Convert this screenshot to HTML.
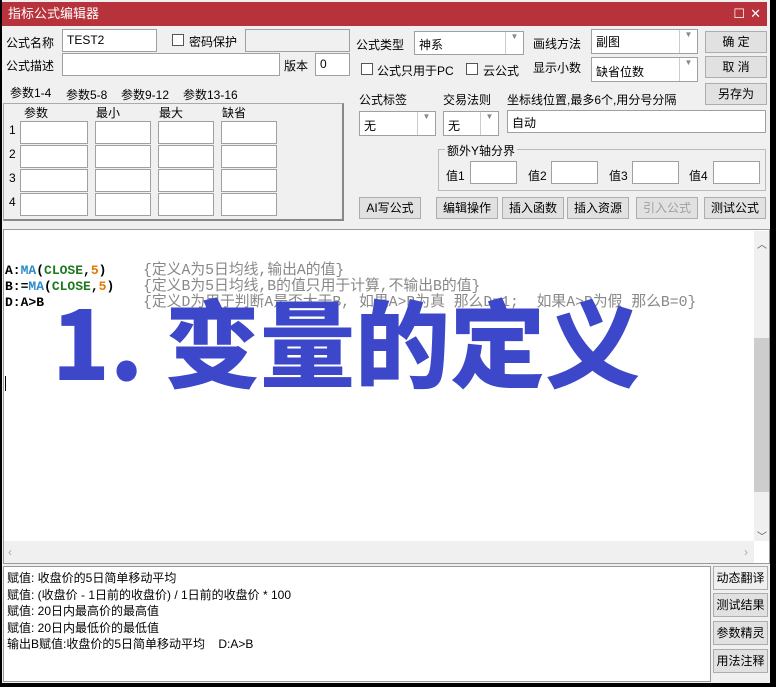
<!DOCTYPE html>
<html><head><meta charset="utf-8"><style>
*{box-sizing:border-box;margin:0;padding:0}
body{width:776px;height:687px;background:#000;position:relative;overflow:hidden;font-family:"Liberation Sans","Noto Sans CJK SC",sans-serif;font-size:12px;color:#000}
.a{position:absolute}
.win{left:2px;top:0;width:768px;height:683px;background:#f0f0f0}
.title{left:2px;top:2px;width:765px;height:24px;background:#b7323a;color:#fff;font-size:13px;line-height:24px;padding-left:6px}
.in{position:absolute;background:#fff;border:1px solid #a0a0a0}
.btn{position:absolute;background:#e1e1e1;border:1px solid #adadad;text-align:center;font-size:12px}
.lb{position:absolute;font-size:12px;white-space:nowrap}
.cb{position:absolute;width:12px;height:12px;border:1px solid #555;background:#fff}
.dd{position:absolute;right:0;top:0;bottom:0;width:18px;border-left:1px solid #ccc;color:#888;font-size:8px;text-align:center}
.code{font-family:"Liberation Mono","DejaVu Sans Mono","Noto Sans CJK SC",monospace;font-size:13px;font-weight:bold;white-space:pre;position:absolute;left:5px}
.cm{position:absolute;left:143px;color:#888;font-family:"Liberation Mono","Noto Sans CJK SC",monospace;font-size:14.8px;white-space:pre;line-height:16px}
</style></head><body>
<div class="a win"></div>
<div class="a title">指标公式编辑器<span style="position:absolute;right:22px;top:0">☐</span><span style="position:absolute;right:6px;top:0">✕</span></div>

<div class="lb" style="left:6px;top:34px">公式名称</div>
<div class="in" style="left:62px;top:29px;width:95px;height:23px;padding:3px 4px">TEST2</div>
<div class="cb" style="left:172px;top:34px"></div><div class="lb" style="left:189px;top:33px">密码保护</div>
<div class="in" style="left:245px;top:29px;width:105px;height:23px;background:#f0f0f0"></div>
<div class="lb" style="left:6px;top:57px">公式描述</div>
<div class="in" style="left:62px;top:53px;width:218px;height:23px"></div>
<div class="lb" style="left:284px;top:57px">版本</div>
<div class="in" style="left:315px;top:53px;width:35px;height:23px;padding:3px 4px">0</div>

<div class="lb" style="left:10px;top:84px">参数1-4</div>
<div class="lb" style="left:66px;top:86px">参数5-8</div>
<div class="lb" style="left:121px;top:86px">参数9-12</div>
<div class="lb" style="left:183px;top:86px">参数13-16</div>
<div class="a" style="left:3px;top:103px;width:341px;height:118px;border:1px solid #aaa;border-bottom:2px solid #888;border-right:2px solid #888"></div>
<div class="lb" style="left:24px;top:104px">参数</div><div class="lb" style="left:96px;top:104px">最小</div><div class="lb" style="left:159px;top:104px">最大</div><div class="lb" style="left:222px;top:104px">缺省</div>
<div class="lb" style="left:9px;top:123px">1</div><div class="lb" style="left:9px;top:147px">2</div><div class="lb" style="left:9px;top:171px">3</div><div class="lb" style="left:9px;top:195px">4</div>
<div class="in" style="left:20px;top:121px;width:68px;height:23px"></div><div class="in" style="left:95px;top:121px;width:56px;height:23px"></div><div class="in" style="left:158px;top:121px;width:56px;height:23px"></div><div class="in" style="left:221px;top:121px;width:56px;height:23px"></div>
<div class="in" style="left:20px;top:145px;width:68px;height:23px"></div><div class="in" style="left:95px;top:145px;width:56px;height:23px"></div><div class="in" style="left:158px;top:145px;width:56px;height:23px"></div><div class="in" style="left:221px;top:145px;width:56px;height:23px"></div>
<div class="in" style="left:20px;top:169px;width:68px;height:23px"></div><div class="in" style="left:95px;top:169px;width:56px;height:23px"></div><div class="in" style="left:158px;top:169px;width:56px;height:23px"></div><div class="in" style="left:221px;top:169px;width:56px;height:23px"></div>
<div class="in" style="left:20px;top:193px;width:68px;height:23px"></div><div class="in" style="left:95px;top:193px;width:56px;height:23px"></div><div class="in" style="left:158px;top:193px;width:56px;height:23px"></div><div class="in" style="left:221px;top:193px;width:56px;height:23px"></div>

<div class="lb" style="left:356px;top:36px">公式类型</div>
<div class="in" style="left:414px;top:31px;width:110px;height:24px;padding:4px 4px">神系<div class="dd">▼</div></div>
<div class="lb" style="left:533px;top:35px">画线方法</div>
<div class="in" style="left:591px;top:29px;width:107px;height:25px;padding:3px 4px">副图<div class="dd">▼</div></div>
<div class="btn" style="left:705px;top:31px;width:62px;height:22px;line-height:20px">确 定</div>
<div class="cb" style="left:361px;top:63px"></div><div class="lb" style="left:377px;top:62px">公式只用于PC</div>
<div class="cb" style="left:466px;top:63px"></div><div class="lb" style="left:483px;top:62px">云公式</div>
<div class="lb" style="left:533px;top:59px">显示小数</div>
<div class="in" style="left:591px;top:57px;width:107px;height:25px;padding:5px 4px">缺省位数<div class="dd">▼</div></div>
<div class="btn" style="left:705px;top:56px;width:62px;height:22px;line-height:20px">取 消</div>
<div class="btn" style="left:705px;top:83px;width:62px;height:22px;line-height:20px">另存为</div>
<div class="lb" style="left:359px;top:91px">公式标签</div>
<div class="lb" style="left:443px;top:91px">交易法则</div>
<div class="lb" style="left:507px;top:91px">坐标线位置,最多6个,用分号分隔</div>
<div class="in" style="left:359px;top:111px;width:77px;height:25px;padding:5px 4px">无<div class="dd">▼</div></div>
<div class="in" style="left:443px;top:111px;width:56px;height:25px;padding:5px 4px">无<div class="dd">▼</div></div>
<div class="in" style="left:507px;top:110px;width:259px;height:23px;padding:3px 4px">自动</div>
<div class="a" style="left:438px;top:149px;width:328px;height:42px;border:1px solid #bbb"></div>
<div class="lb" style="left:445px;top:142px;background:#f0f0f0;padding:0 2px">额外Y轴分界</div>
<div class="lb" style="left:446px;top:167px">值1</div><div class="in" style="left:470px;top:161px;width:47px;height:23px"></div>
<div class="lb" style="left:528px;top:167px">值2</div><div class="in" style="left:551px;top:161px;width:47px;height:23px"></div>
<div class="lb" style="left:609px;top:167px">值3</div><div class="in" style="left:632px;top:161px;width:47px;height:23px"></div>
<div class="lb" style="left:689px;top:167px">值4</div><div class="in" style="left:713px;top:161px;width:47px;height:23px"></div>
<div class="btn" style="left:359px;top:197px;width:62px;height:22px;line-height:20px">AI写公式</div>
<div class="btn" style="left:436px;top:197px;width:62px;height:22px;line-height:20px">编辑操作</div>
<div class="btn" style="left:502px;top:197px;width:62px;height:22px;line-height:20px">插入函数</div>
<div class="btn" style="left:567px;top:197px;width:62px;height:22px;line-height:20px">插入资源</div>
<div class="btn" style="left:636px;top:197px;width:62px;height:22px;line-height:20px;color:#a0a0a0">引入公式</div>
<div class="btn" style="left:704px;top:197px;width:62px;height:22px;line-height:20px">测试公式</div>

<div class="a" style="left:3px;top:229px;width:767px;height:335px;border:1px solid #999;background:#fff"></div>
<div class="a" style="left:754px;top:231px;width:15px;height:310px;background:#f0f0f0"></div>
<div class="a" style="left:754px;top:338px;width:15px;height:154px;background:#cdcdcd"></div>
<div class="lb" style="left:757px;top:236px;color:#555;font-size:10px">︿</div>
<div class="lb" style="left:757px;top:528px;color:#555;font-size:10px">﹀</div>
<div class="a" style="left:4px;top:541px;width:750px;height:22px;background:#f0f0f0"></div>
<div class="lb" style="left:8px;top:545px;color:#aaa">‹</div><div class="lb" style="left:744px;top:545px;color:#aaa">›</div>

<div class="code" style="top:263px">A:<span style="color:#2a8bc8">MA</span>(<span style="color:#1e7a1e">CLOSE</span>,<span style="color:#e07b00">5</span>)</div>
<div class="code" style="top:279px">B:=<span style="color:#2a8bc8">MA</span>(<span style="color:#1e7a1e">CLOSE</span>,<span style="color:#e07b00">5</span>)</div>
<div class="code" style="top:295px">D:A&gt;B</div>
<div class="cm" style="top:263px">{定义A为5日均线,输出A的值}</div>
<div class="cm" style="top:279px">{定义B为5日均线,B的值只用于计算,不输出B的值}</div>
<div class="cm" style="top:295px">{定义D为用于判断A是否大于B, 如果A>B为真 那么D=1;  如果A>B为假 那么B=0}</div>
<div class="a" style="left:5px;top:376px;width:1px;height:15px;background:#000"></div>
<div class="lb" style="left:52px;top:280px;font-family:'Noto Sans CJK SC',sans-serif;font-weight:900;font-size:95px;line-height:120px;color:#3d47c9;letter-spacing:0">1. 变量的定义</div>

<div class="a" style="left:3px;top:566px;width:708px;height:116px;background:#fff;border:1px solid #999"></div>
<div class="lb" style="left:7px;top:570px;line-height:16.5px">赋值: 收盘价的5日简单移动平均<br>赋值: (收盘价 - 1日前的收盘价) / 1日前的收盘价 * 100<br>赋值: 20日内最高价的最高值<br>赋值: 20日内最低价的最低值<br>输出B赋值:收盘价的5日简单移动平均&nbsp;&nbsp;&nbsp; D:A&gt;B</div>
<div class="btn" style="left:713px;top:566px;width:55px;height:24px;line-height:22px;background:#f0f0f0">动态翻译</div>
<div class="btn" style="left:713px;top:593px;width:55px;height:24px;line-height:22px">测试结果</div>
<div class="btn" style="left:713px;top:621px;width:55px;height:24px;line-height:22px">参数精灵</div>
<div class="btn" style="left:713px;top:649px;width:55px;height:24px;line-height:22px">用法注释</div>
</body></html>
